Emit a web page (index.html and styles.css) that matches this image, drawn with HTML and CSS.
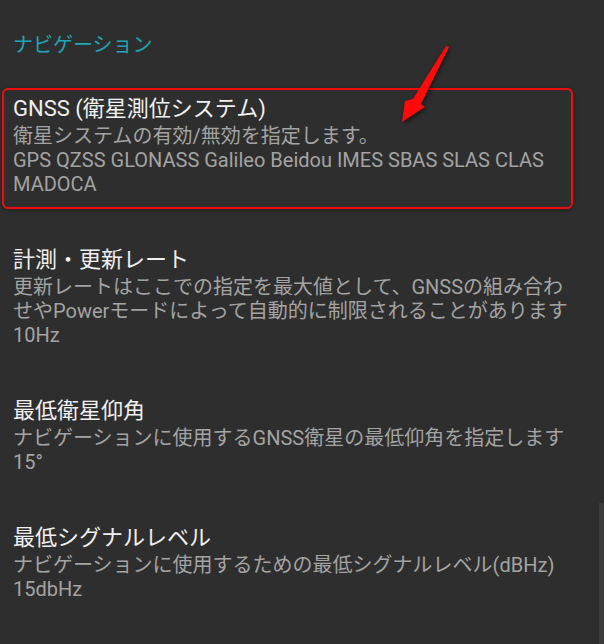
FILE: index.html
```html
<!DOCTYPE html>
<html lang="ja">
<head>
    <meta charset="UTF-8">
    <meta name="viewport" content="width=device-width, initial-scale=1.0">
    <title>ナビゲーション設定</title>
    <link rel="stylesheet" href="styles.css">
</head>
<body>
    <div class="screen">
        <div class="category">ナビゲーション</div>

        <div class="pref-list">
            <div class="pref marked">
                <div class="pref-title">GNSS (衛星測位システム)</div>
                <div class="pref-summary">衛星システムの有効/無効を指定します。</div>
                <div class="pref-summary">GPS QZSS GLONASS Galileo Beidou IMES SBAS SLAS CLAS MADOCA</div>
            </div>
            <div class="pref">
                <div class="pref-title">計測・更新レート</div>
                <div class="pref-summary">更新レートはここでの指定を最大値として、GNSSの組み合わせやPowerモードによって自動的に制限されることがあります</div>
                <div class="pref-summary">10Hz</div>
            </div>
            <div class="pref">
                <div class="pref-title">最低衛星仰角</div>
                <div class="pref-summary">ナビゲーションに使用するGNSS衛星の最低仰角を指定します</div>
                <div class="pref-summary">15°</div>
            </div>
            <div class="pref">
                <div class="pref-title">最低シグナルレベル</div>
                <div class="pref-summary">ナビゲーションに使用するための最低シグナルレベル(dBHz)</div>
                <div class="pref-summary">15dbHz</div>
            </div>
        </div>

        <!-- annotation arrow pointing at the GNSS item -->
        <svg class="arrow" width="60" height="90" viewBox="390 40 60 90">
            <polygon points="449,47 421,104 425,107 402,122 405,101 413,99 446,46" fill="#ff0a0a"/>
        </svg>

        <div class="scroll-thumb"></div>
    </div>
</body>
</html>
```

FILE: styles.css
```css
body {
    margin: 0;
    padding: 0;
    background-color: #2e2e2e;
    font-family: Roboto, "Noto Sans CJK JP", sans-serif;
}
.screen {
    position: relative;
    height: 644px;
    overflow: hidden;
    padding-top: 32px;
    box-sizing: border-box;
}
.category {
    padding-left: 13px;
    font-size: 20px;
    line-height: 26px;
    color: #1ea5b8;
}
.pref-list {
    display: flex;
    flex-direction: column;
    gap: 30px;
    margin: 30px 31px 0 2px;
}
.pref {
    padding: 4px 0 11px 9px;
    border: 2px solid transparent;
    border-radius: 6px;
}
.pref.marked {
    border-color: #f20c0c;
    box-shadow: 0 1px 4px rgba(0, 0, 0, 0.35);
}
.pref-title {
    font-size: 22px;
    line-height: 30px;
    color: #f0f0f0;
}
.pref-summary {
    font-size: 20px;
    line-height: 24px;
    color: #a3a3a3;
}
.arrow {
    position: absolute;
    left: 390px;
    top: 40px;
    filter: drop-shadow(1px 2px 2px rgba(0, 0, 0, 0.5));
}
.scroll-thumb {
    position: absolute;
    right: 0;
    top: 503px;
    bottom: 0;
    width: 5px;
    background-color: #3b3b3b;
}
```
